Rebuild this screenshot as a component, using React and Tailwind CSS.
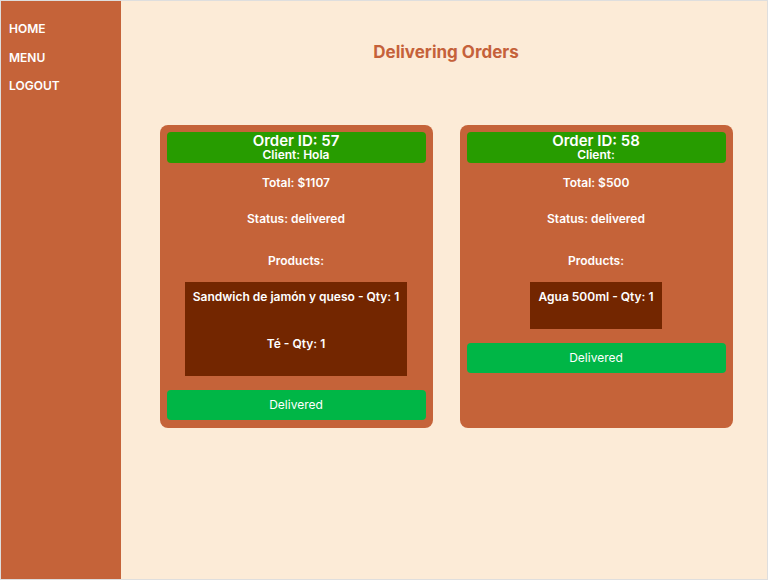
const orders = [
  {
    id: 57,
    client: "Hola",
    total: 1107,
    status: "delivered",
    products: [
      { name: "Sandwich de jamón y queso", qty: 1 },
      { name: "Té", qty: 1 },
    ],
  },
  {
    id: 58,
    client: "",
    total: 500,
    status: "delivered",
    products: [{ name: "Agua 500ml", qty: 1 }],
  },
];

const OrderCard = ({ order }) => (
  <div className="w-[273px] bg-[#c56339] rounded-lg pt-[7px] px-[7px] pb-[8px] flex flex-col items-center text-white">
    <div className="w-full h-[31px] bg-[#279c00] rounded flex flex-col items-center justify-center">
      <h3 className="text-[15px] font-semibold leading-[15px]">Order ID: {order.id}</h3>
      <p className="text-[12px] font-semibold leading-[14px]">Client: {order.client}</p>
    </div>
    <p className="mt-[12px] text-[12px] font-semibold leading-[16px]">Total: ${order.total}</p>
    <p className="mt-[20px] text-[12px] font-semibold leading-[16px]">Status: {order.status}</p>
    <p className="mt-[26px] text-[12px] font-semibold leading-[16px]">Products:</p>
    <div className="mt-[13px] bg-[#732600] px-2">
      {order.products.map((p) => (
        <div key={p.name} className="h-[47px] pt-[7px] text-center text-[12px] font-semibold leading-[16px]">
          {p.name} - Qty: {p.qty}
        </div>
      ))}
    </div>
    <button className="mt-[14px] w-full h-[30px] bg-[#00b646] rounded text-[12px] text-white">
      Delivered
    </button>
  </div>
);

const App = () => {
  return (
    <div
      className="w-[768px] h-[580px] flex border border-[#dedede] overflow-hidden"
      style={{ fontFamily: "Inter, 'Noto Sans', sans-serif" }}
    >
      <aside className="w-[120px] bg-[#c56339] pt-[20px] pl-[8px] flex flex-col gap-[12px] text-white text-[12px] font-semibold leading-[16.5px]">
        <a>HOME</a>
        <a>MENU</a>
        <a>LOGOUT</a>
      </aside>
      <main className="flex-1 bg-[#fcebd7] pl-[4px] flex flex-col items-center">
        <h1 className="mt-[40px] text-[17px] font-bold text-[#c5613a] leading-[22px]">
          Delivering Orders
        </h1>
        <div className="mt-[62px] flex gap-[27px] items-stretch">
          {orders.map((o) => (
            <OrderCard key={o.id} order={o} />
          ))}
        </div>
      </main>
    </div>
  );
};

export default App;
